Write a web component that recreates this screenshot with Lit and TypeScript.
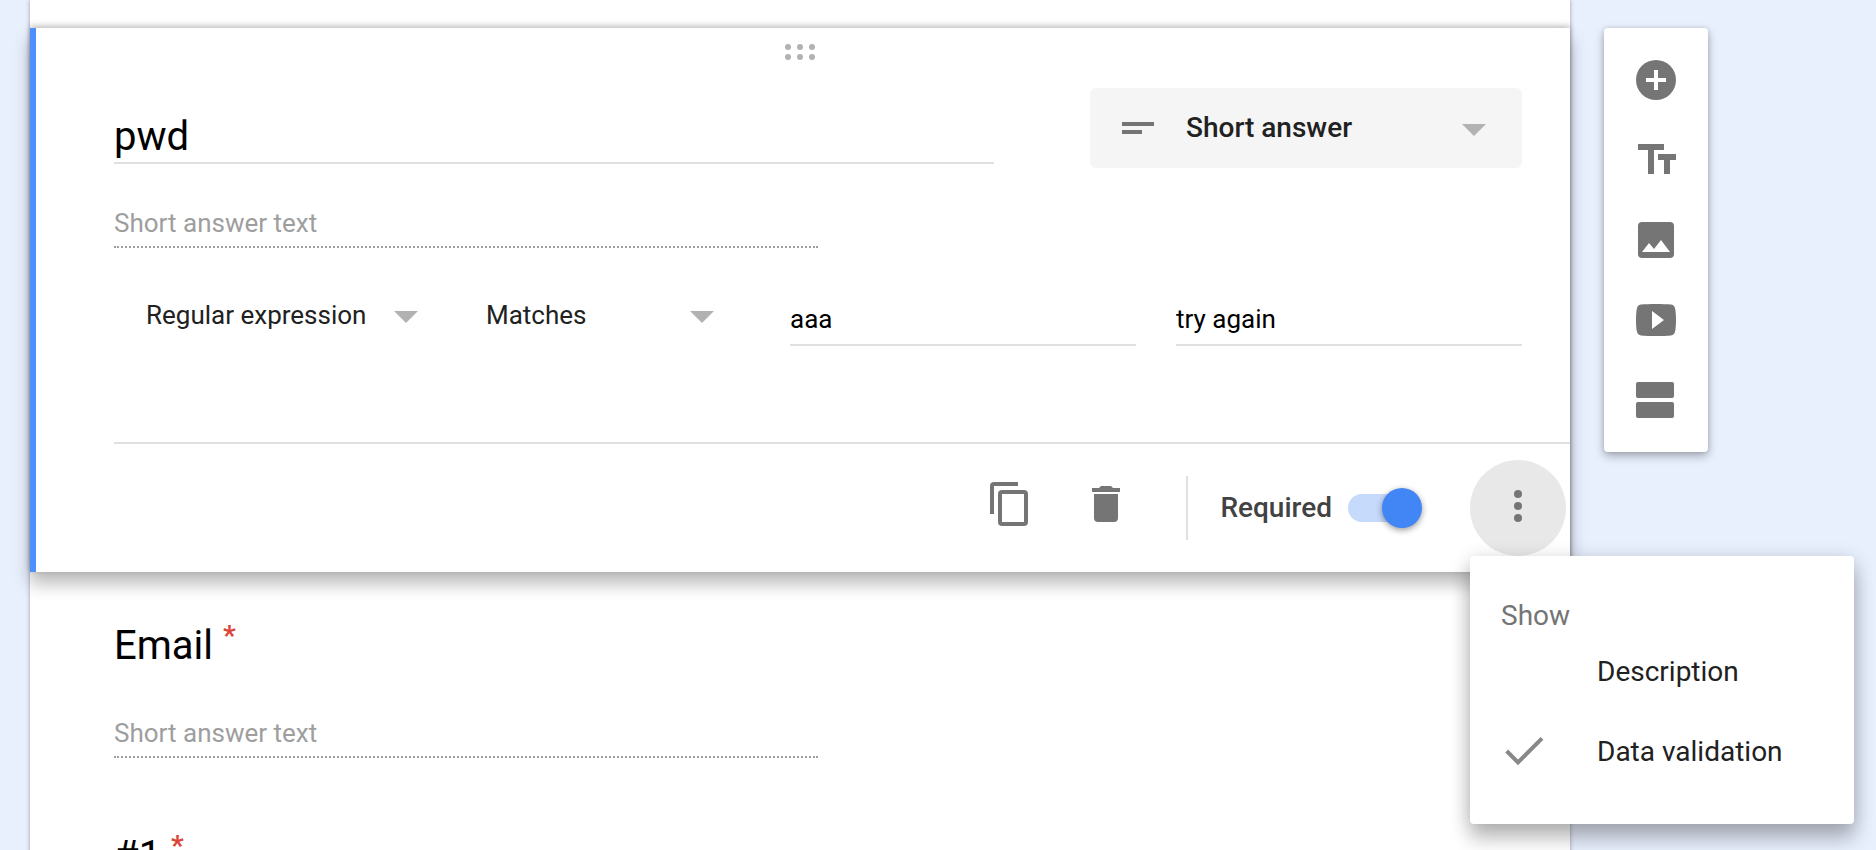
import { LitElement, html, css, svg, nothing } from "lit";
import { customElement, property, state } from "lit/decorators.js";

const arrow = html`<svg class="arrow" width="24" height="12" viewBox="0 0 24 12" aria-hidden="true">
  <path d="M0 0h24L12 12z" fill="currentColor" />
</svg>`;

const paths = {
  add: svg`<path d="M12 2a10 10 0 1 0 0 20 10 10 0 0 0 0-20zm5 11h-4v4h-2v-4H7v-2h4V7h2v4h4v2z"/>`,
  title: svg`<path d="M3 4v3h5v12h3V7h5V4H3zm19 5h-9v3h3v7h3v-7h3V9z"/>`,
  image: svg`<path d="M21 19V5a2 2 0 0 0-2-2H5a2 2 0 0 0-2 2v14a2 2 0 0 0 2 2h14a2 2 0 0 0 2-2zM8.500 13.500l2.500 3L14.500 12l4.500 6H5l3.500-4.500z"/>`,
  video: svg`<path d="M12 4c-3 0-5.500.1-7.500.3C3 4.500 2.500 5.500 2.300 7 2.100 8.500 2 10 2 12s.1 3.500.3 5c.2 1.500.7 2.500 2.200 2.700 2 .2 4.500.3 7.500.3s5.500-.1 7.500-.3c1.500-.2 2-1.200 2.200-2.700.2-1.500.3-3 .3-5s-.1-3.500-.3-5c-.2-1.500-.7-2.500-2.200-2.700C17.500 4.100 15 4 12 4zm-2 3.500l6 4.500-6 4.500v-9z"/>`,
  section: svg`<path d="M3 3h17a1 1 0 0 1 1 1v6a1 1 0 0 1-1 1H3a1 1 0 0 1-1-1V4a1 1 0 0 1 1-1zm0 10h17a1 1 0 0 1 1 1v6a1 1 0 0 1-1 1H3a1 1 0 0 1-1-1v-6a1 1 0 0 1 1-1z"/>`,
  copy: svg`<path d="M16 1H4a2 2 0 0 0-2 2v14h2V3h12V1zm3 4H8a2 2 0 0 0-2 2v14a2 2 0 0 0 2 2h11a2 2 0 0 0 2-2V7a2 2 0 0 0-2-2zm0 16H8V7h11v14z"/>`,
  trash: svg`<path d="M6 19a2 2 0 0 0 2 2h8a2 2 0 0 0 2-2V7H6v12zM19 4h-3.500l-1-1h-5l-1 1H5v2h14V4z"/>`,
  more: svg`<circle cx="12" cy="6" r="2"/><circle cx="12" cy="12" r="2"/><circle cx="12" cy="18" r="2"/>`,
  check: svg`<path d="M2.850 11.500L8.500 17.200 20.500 5.200" fill="none" stroke="#888" stroke-width="2"/>`,
};

const icon = (name: keyof typeof paths) =>
  html`<svg class="icon" width="48" height="48" viewBox="0 0 24 24" fill="currentColor" aria-hidden="true">${paths[name]}</svg>`;

const shared = css`
  *, *::before, *::after { box-sizing: border-box; }
  :host { display: block; }
  button, input, select {
    font: inherit;
    color: inherit;
    margin: 0;
    padding: 0;
    border: 0;
    border-radius: 0;
    background: none;
    outline: none;
  }
  button, select { cursor: pointer; }
  .icon, .arrow { display: block; flex: none; }
`;

const answer = css`
  .answer {
    width: 50%;
    padding-bottom: 8px;
    border-bottom: 2px dotted #9e9e9e;
    color: #9e9e9e;
    font-size: 26px;
    line-height: 30px;
  }
`;

@customElement("question-row")
class QuestionRow extends LitElement {
  @property() heading = "";

  static styles = [shared, answer, css`
    :host { padding: 50px 48px 24px 84px; }
    .heading {
      margin: 0 0 48px;
      font-size: 40px;
      font-weight: 400;
      line-height: 48px;
    }
    .star {
      color: #db4437;
      font-size: 28px;
      font-weight: 700;
      line-height: 20px;
      vertical-align: super;
    }
  `];

  render() {
    return html`
      <h2 class="heading">${this.heading} <span class="star">*</span></h2>
      <div class="answer">Short answer text</div>
    `;
  }
}

@customElement("side-tools")
class SideTools extends LitElement {
  static styles = [shared, css`
    .tools {
      display: flex;
      flex-direction: column;
      width: 104px;
      padding: 12px 0;
      border-radius: 4px;
      background: #fff;
      color: #757575;
      box-shadow: 0 4px 10px rgba(0, 0, 0, 0.3), 0 0 4px rgba(0, 0, 0, 0.1);
    }
    .tool {
      display: flex;
      align-items: center;
      justify-content: center;
      height: 80px;
    }
  `];

  render() {
    const tools: [keyof typeof paths, string][] = [
      ["add", "Add question"],
      ["title", "Add title and description"],
      ["image", "Add image"],
      ["video", "Add video"],
      ["section", "Add section"],
    ];
    return html`<div class="tools" role="toolbar" aria-label="Insert">
      ${tools.map(([name, label]) => html`<button class="tool" aria-label=${label}>${icon(name)}</button>`)}
    </div>`;
  }
}

@customElement("question-editor")
class QuestionEditor extends LitElement {
  @state() private menuOpen = true;
  @state() private description = false;
  @state() private validation = true;

  static styles = [shared, answer, css`
    :host {
      position: relative;
      z-index: 1;
      padding-top: 16px;
      background: #fff;
      box-shadow: inset 6px 0 #4d90fe, 0 -2px 6px rgba(0, 0, 0, 0.25), 0 12px 16px rgba(0, 0, 0, 0.27);
    }
    .handle { display: block; margin: 0 auto; cursor: move; }
    .body { padding: 28px 48px 96px 84px; }
    .top { display: flex; align-items: flex-start; gap: 96px; margin-bottom: 40px; }
    .title {
      flex: 1;
      min-width: 0;
      height: 76px;
      padding: 24px 0 2px;
      border-bottom: 2px solid #e0e0e0;
      font-size: 40px;
      line-height: 48px;
    }
    .pick { display: grid; align-items: center; color: #212121; }
    .pick > * { grid-area: 1 / 1; }
    .pick select { appearance: none; width: 100%; }
    .arrow {
      justify-self: end;
      margin: 4px 36px 0 0;
      color: #b2b2b2;
      pointer-events: none;
    }
    .type { flex: 0 0 432px; border-radius: 6px; background: #f5f5f5; }
    .type select {
      height: 80px;
      padding-left: 96px;
      font-size: 28px;
      font-weight: 500;
      line-height: 32px;
    }
    .lines { margin-left: 32px; color: #757575; pointer-events: none; }
    .rules { display: flex; align-items: flex-start; margin-top: 40px; font-size: 26px; line-height: 30px; }
    .rules select { height: 54px; padding: 12px 32px; line-height: 30px; }
    .kind { flex: 0 0 340px; }
    .test { flex: 0 0 296px; }
    .value {
      flex: 1;
      min-width: 0;
      height: 58px;
      margin-left: 40px;
      padding: 16px 0 10px;
      border-bottom: 2px solid #e0e0e0;
      line-height: 30px;
    }
    .footer {
      display: flex;
      align-items: center;
      justify-content: flex-end;
      margin-left: 84px;
      padding: 16px 4px 16px 0;
      border-top: 2px solid #e0e0e0;
      color: #757575;
    }
    .action {
      display: flex;
      align-items: center;
      justify-content: center;
      width: 96px;
      height: 96px;
      padding-bottom: 8px;
    }
    .required {
      display: flex;
      align-items: center;
      gap: 16px;
      height: 64px;
      margin: 0 48px 0 32px;
      padding-left: 32px;
      border-left: 2px solid #e0e0e0;
      color: #424242;
      font-size: 28px;
      font-weight: 500;
      line-height: 32px;
    }
    .switch {
      appearance: none;
      position: relative;
      width: 74px;
      height: 40px;
      cursor: pointer;
    }
    .switch::before {
      content: "";
      position: absolute;
      inset: 6px 2px 6px 0;
      border-radius: 14px;
      background: #bdbdbd;
    }
    .switch::after {
      content: "";
      position: absolute;
      left: 0;
      top: 0;
      width: 40px;
      height: 40px;
      border-radius: 50%;
      background: #fafafa;
      box-shadow: 0 2px 6px rgba(0, 0, 0, 0.4);
    }
    .switch:checked::before { background: #c6dafc; }
    .switch:checked::after { left: auto; right: 0; background: #4285f4; }
    .anchor { position: relative; }
    .more { padding-bottom: 4px; border-radius: 50%; background: #e8e8e8; }
    .menu {
      position: absolute;
      top: 100%;
      left: 0;
      width: 384px;
      padding: 44px 0 32px;
      border-radius: 4px;
      background: #fff;
      box-shadow: 0 16px 20px rgba(0, 0, 0, 0.2), 0 4px 20px rgba(0, 0, 0, 0.2);
      font-size: 28px;
      line-height: 32px;
    }
    .caption { padding-left: 31px; color: #757575; }
    .item {
      display: flex;
      align-items: center;
      gap: 48px;
      width: 100%;
      height: 80px;
      padding-left: 31px;
      color: #212121;
      text-align: left;
    }
    .mark { flex: 0 0 48px; }
  `];

  render() {
    return html`
      <svg class="handle" width="30" height="16" viewBox="0 0 30 16" fill="#b2b2b2" aria-hidden="true">
        ${[3, 15, 27].map((x) => svg`<circle cx=${x} cy="3" r="3"/><circle cx=${x} cy="13" r="3"/>`)}
      </svg>
      <div class="body">
        <div class="top">
          <input class="title" aria-label="Question" .value=${"pwd"} />
          <div class="pick type">
            <select aria-label="Question type"><option>Short answer</option><option>Paragraph</option></select>
            <svg class="lines" width="32" height="12" viewBox="0 0 32 12" fill="currentColor" aria-hidden="true">
              <path d="M0 0h32v4H0zM0 8h20v4H0z" />
            </svg>
            ${arrow}
          </div>
        </div>
        <div class="answer">Short answer text</div>
        ${this.validation ? html`<div class="rules">
          <div class="pick kind">
            <select aria-label="Validation kind"><option>Regular expression</option><option>Number</option></select>
            ${arrow}
          </div>
          <div class="pick test">
            <select aria-label="Validation test"><option>Matches</option><option>Contains</option></select>
            ${arrow}
          </div>
          <input class="value" aria-label="Pattern" .value=${"aaa"} />
          <input class="value" aria-label="Error text" .value=${"try again"} />
        </div>` : nothing}
      </div>
      <div class="footer">
        <button class="action" aria-label="Duplicate">${icon("copy")}</button>
        <button class="action" aria-label="Delete">${icon("trash")}</button>
        <label class="required">Required<input class="switch" type="checkbox" role="switch" checked /></label>
        <div class="anchor">
          <button
            class="action more"
            aria-label="More options"
            aria-haspopup="menu"
            aria-expanded=${this.menuOpen ? "true" : "false"}
            @click=${() => (this.menuOpen = !this.menuOpen)}
          >${icon("more")}</button>
          ${this.menuOpen ? html`<div class="menu" role="menu" aria-label="Show">
            <div class="caption">Show</div>
            ${this.item("Description", this.description, () => (this.description = !this.description))}
            ${this.item("Data validation", this.validation, () => (this.validation = !this.validation))}
          </div>` : nothing}
        </div>
      </div>
    `;
  }

  private item(label: string, on: boolean, toggle: () => void) {
    return html`<button class="item" role="menuitemcheckbox" aria-checked=${on ? "true" : "false"} @click=${toggle}>
      <span class="mark">${on ? icon("check") : nothing}</span>${label}
    </button>`;
  }
}

@customElement("app-root")
class AppRoot extends LitElement {
  static styles = [shared, css`
    :host {
      height: 100vh;
      overflow: hidden auto;
      scrollbar-width: none;
      background: #e8effd;
      color: #000;
      font-family: Roboto, "Liberation Sans", sans-serif;
    }
    .page {
      display: flex;
      align-items: flex-start;
      gap: 34px;
      min-height: 100%;
      padding: 0 168px 0 30px;
    }
    .paper {
      position: relative;
      z-index: 1;
      flex: 1;
      min-width: 0;
      padding: 28px 0;
      background: #fff;
      box-shadow: 0 0 4px rgba(0, 0, 0, 0.35);
    }
    .side { flex: none; padding-top: 28px; }
  `];

  render() {
    return html`<div class="page">
      <main class="paper">
        <question-editor></question-editor>
        <question-row heading="Email"></question-row>
        <question-row heading="#1"></question-row>
      </main>
      <side-tools class="side"></side-tools>
    </div>`;
  }
}
